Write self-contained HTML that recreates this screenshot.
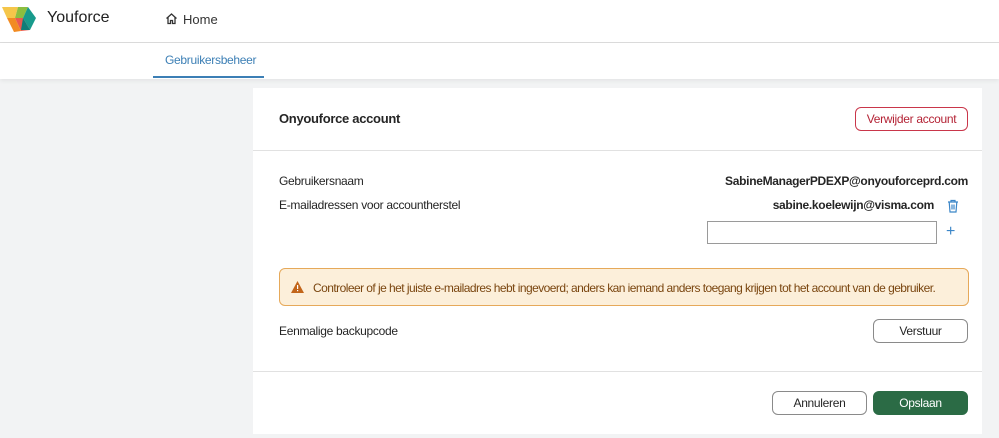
<!DOCTYPE html>
<html><head><style>
*{margin:0;padding:0;box-sizing:border-box}
body{width:999px;height:438px;overflow:hidden;background:#f2f3f4;font-family:"Liberation Sans",sans-serif;color:#252525;position:relative;font-size:12px;letter-spacing:-0.3px}
.top{position:absolute;left:0;top:0;width:999px;height:43px;background:#fff;border-bottom:1px solid #dcdcdc}
.sub{position:absolute;left:0;top:43px;width:999px;height:36px;background:#fff;box-shadow:0 2px 4px rgba(0,0,0,.06)}
.abs{position:absolute;white-space:nowrap}
.card{position:absolute;left:253px;top:88px;width:729px;height:346px;background:#fff}
.btn{position:absolute;border-radius:6px;border:1px solid #8a8a8a;background:#fff;display:flex;align-items:center;justify-content:center;font-size:12px}
</style></head><body>
<div class="top">
<svg class="abs" style="left:2px;top:5px" width="34" height="27" viewBox="0 0 34 27">
<polygon points="0,2 16,2 13,13 5,13" fill="#f5c64a"/>
<polygon points="16,2 26,2 21,13 13,13" fill="#8cbe3f"/>
<polygon points="26,2 34,13 28,25 21,13" fill="#189a8c"/>
<polygon points="5,13 13,13 19,26 12,27" fill="#f28b22"/>
<polygon points="13,13 21,13 28,25 19,26" fill="#ea5a4f"/>
<polygon points="21,13 28,25 19,25" fill="#0f7d78"/>
</svg>
<div class="abs" style="left:47px;top:9px;font-size:16px;color:#222;letter-spacing:0">Youforce</div>
<svg class="abs" style="left:165px;top:12px" width="13" height="13" viewBox="0 0 13 13"><path d="M1.5 6.5 6.5 2 11.5 6.5M3 5.5v6h2.5V8.5h2v3H10v-6" fill="none" stroke="#333" stroke-width="1.3"/></svg>
<div class="abs" style="left:183px;top:12px;font-size:13px;color:#333;letter-spacing:0">Home</div>
</div>
<div class="sub">
<div class="abs" style="left:165px;top:10px;font-size:12px;color:#3c7fb5">Gebruikersbeheer</div>
<div class="abs" style="left:153px;top:33px;width:111px;height:2px;background:#3c7fb5"></div>
</div>
<div class="card">
<div class="abs" style="left:26px;top:23px;font-size:13px;font-weight:bold">Onyouforce account</div>
<div class="btn" style="left:602px;top:19px;width:113px;height:24px;border-color:#c9364a;color:#b42335">Verwijder account</div>
<div class="abs" style="left:0;top:62px;width:729px;height:1px;background:#e1e1e1"></div>
<div class="abs" style="left:26px;top:86px">Gebruikersnaam</div>
<div class="abs" style="right:14px;top:86px;font-weight:bold">SabineManagerPDEXP@onyouforceprd.com</div>
<div class="abs" style="left:26px;top:110px">E-mailadressen voor accountherstel</div>
<div class="abs" style="right:48px;top:110px;font-weight:bold">sabine.koelewijn@visma.com</div>
<svg class="abs" style="left:694px;top:111px" width="12" height="14" viewBox="0 0 12 14"><path d="M1 3h10M4 3V1.5h4V3M2.2 3l.8 10h6l.8-10M5 5.5v5M7 5.5v5" fill="none" stroke="#3b86c8" stroke-width="1.2"/></svg>
<div class="abs" style="left:454px;top:133px;width:230px;height:23px;border:1px solid #9a9a9a"></div>
<div class="abs" style="left:693px;top:135px;font-size:16px;color:#3b86c8">+</div>
<div class="abs" style="left:26px;top:180px;width:690px;height:38px;background:#fcefda;border:1px solid #e6a95a;border-radius:6px"></div>
<svg class="abs" style="left:38px;top:193px" width="13" height="12" viewBox="0 0 13 12"><path d="M6.5 0 13 12H0z" fill="#c2651a"/><rect x="6" y="4" width="1.2" height="4" fill="#fff"/><rect x="6" y="9" width="1.2" height="1.2" fill="#fff"/></svg>
<div class="abs" style="left:60px;top:193px;color:#7a4610;letter-spacing:-0.55px">Controleer of je het juiste e-mailadres hebt ingevoerd; anders kan iemand anders toegang krijgen tot het account van de gebruiker.</div>
<div class="abs" style="left:26px;top:236px">Eenmalige backupcode</div>
<div class="btn" style="left:620px;top:231px;width:95px;height:24px">Verstuur</div>
<div class="abs" style="left:0;top:283px;width:729px;height:1px;background:#e1e1e1"></div>
<div class="btn" style="left:519px;top:303px;width:95px;height:24px">Annuleren</div>
<div class="btn" style="left:620px;top:303px;width:95px;height:24px;background:#2b6b45;border-color:#2b6b45;color:#fff">Opslaan</div>
</div>
</body></html>
